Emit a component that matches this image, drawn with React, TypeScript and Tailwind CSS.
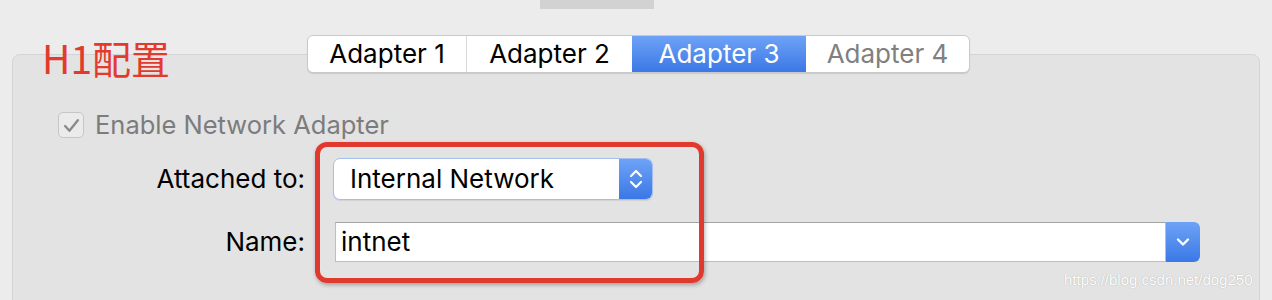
import React from "react";

const TABS = [
  { label: "Adapter 1", w: "w-[159px]", state: "normal" },
  { label: "Adapter 2", w: "w-[165px]", state: "normal" },
  { label: "Adapter 3", w: "w-[174px]", state: "active" },
  { label: "Adapter 4", w: "w-[163px]", state: "dim" },
];

function UpDown() {
  return (
    <svg width="16" height="24" viewBox="0 0 16 24" fill="none" stroke="white" strokeWidth="2.2" strokeLinecap="round" strokeLinejoin="round">
      <path d="M3 9 L8 4 L13 9" />
      <path d="M3 15 L8 20 L13 15" />
    </svg>
  );
}

function Down() {
  return (
    <svg width="16" height="12" viewBox="0 0 16 12" fill="none" stroke="white" strokeWidth="2.4" strokeLinecap="round" strokeLinejoin="round">
      <path d="M3 3.5 L8 8.5 L13 3.5" />
    </svg>
  );
}

export default function App() {
  return (
    <div className="relative w-[1272px] h-[300px] overflow-hidden bg-[#ececec] font-['Inter',sans-serif]">
      <div className="ml-[540px] w-[114px] h-[9px] bg-[#d2d2d2]" />

      <div className="relative z-10 mt-[26px] h-[38px] flex items-start">
        <div className="w-[307px] pl-[42px] pt-[1px] text-[39px] leading-[42px] text-[#e23a2c] font-['Noto_Sans_CJK_SC',sans-serif]">
          H1配置
        </div>
        <div className="flex h-[38px] rounded-[6px] border border-[#c9c9c9] bg-white shadow-[0_1px_1px_rgba(0,0,0,0.12)] overflow-hidden">
          {TABS.map((t, i) => (
            <div
              key={t.label}
              className={
                t.w +
                " flex items-center justify-center text-[26px] leading-[30px] " +
                (t.state === "active"
                  ? "bg-gradient-to-b from-[#6ea2f6] to-[#3b78e6] text-white"
                  : t.state === "dim"
                  ? "text-[#808080]"
                  : "text-black") +
                (i === 0 ? " border-r border-[#d9d9d9]" : "")
              }
            >
              {t.label}
            </div>
          ))}
        </div>
      </div>

      <div className="-mt-[19px] mx-[12px] h-[270px] rounded-[8px] border border-[#d4d4d4] bg-[#e3e3e3]">
        <div className="pl-[45px] pt-[57px] h-[83px] flex items-start gap-[11px]">
          <div className="w-[26px] h-[26px] rounded-[5px] border border-[#c6c6c6] bg-[#ebebeb] flex items-center justify-center">
            <svg width="17" height="15" viewBox="0 0 16 14" fill="none" stroke="#8a8a8a" strokeWidth="2.2" strokeLinecap="round" strokeLinejoin="round">
              <path d="M2 7.5 L6 12 L14 2" />
            </svg>
          </div>
          <span className="text-[25.5px] leading-[26px] text-[#7c7c7c]">Enable Network Adapter</span>
        </div>

        <div className="mt-[20px] flex items-center">
          <div className="w-[292px] text-right text-[26px] leading-[30px] text-black">Attached to:</div>
          <div className="ml-[28px] w-[320px] h-[42px] flex rounded-[7px] border border-[#a3bff0] bg-white shadow-[0_1px_1px_rgba(0,0,0,0.08)] overflow-hidden">
            <div className="flex-1 flex items-center pl-[16px] text-[26px] leading-[30px] text-black">Internal Network</div>
            <div className="w-[33px] flex items-center justify-center bg-gradient-to-b from-[#6ea2f6] to-[#3b78e6]">
              <UpDown />
            </div>
          </div>
        </div>

        <div className="mt-[22px] flex items-center">
          <div className="w-[292px] text-right text-[26px] leading-[30px] text-black">Name:</div>
          <div className="ml-[30px] flex h-[40px]">
            <div className="w-[831px] flex items-center pl-[5px] bg-white border border-[#bdbdbd] border-t-[#a3a3a3] text-[26px] leading-[30px] text-black">
              intnet
            </div>
            <div className="w-[34px] flex items-center justify-center rounded-r-[6px] bg-gradient-to-b from-[#6ea2f6] to-[#3b78e6]">
              <Down />
            </div>
          </div>
        </div>
      </div>

      <div className="absolute left-[315px] top-[142px] w-[389px] h-[141px] rounded-[12px] border-[5px] border-[#e0392d] shadow-[1px_2px_4px_rgba(0,0,0,0.3)]" />

      <div className="absolute left-[1064px] top-[269px] text-[15px] text-white font-['Liberation_Sans',sans-serif] [text-shadow:0_0_1px_#9a9a9a]">
        https://blog.csdn.net/dog250
      </div>
    </div>
  );
}
